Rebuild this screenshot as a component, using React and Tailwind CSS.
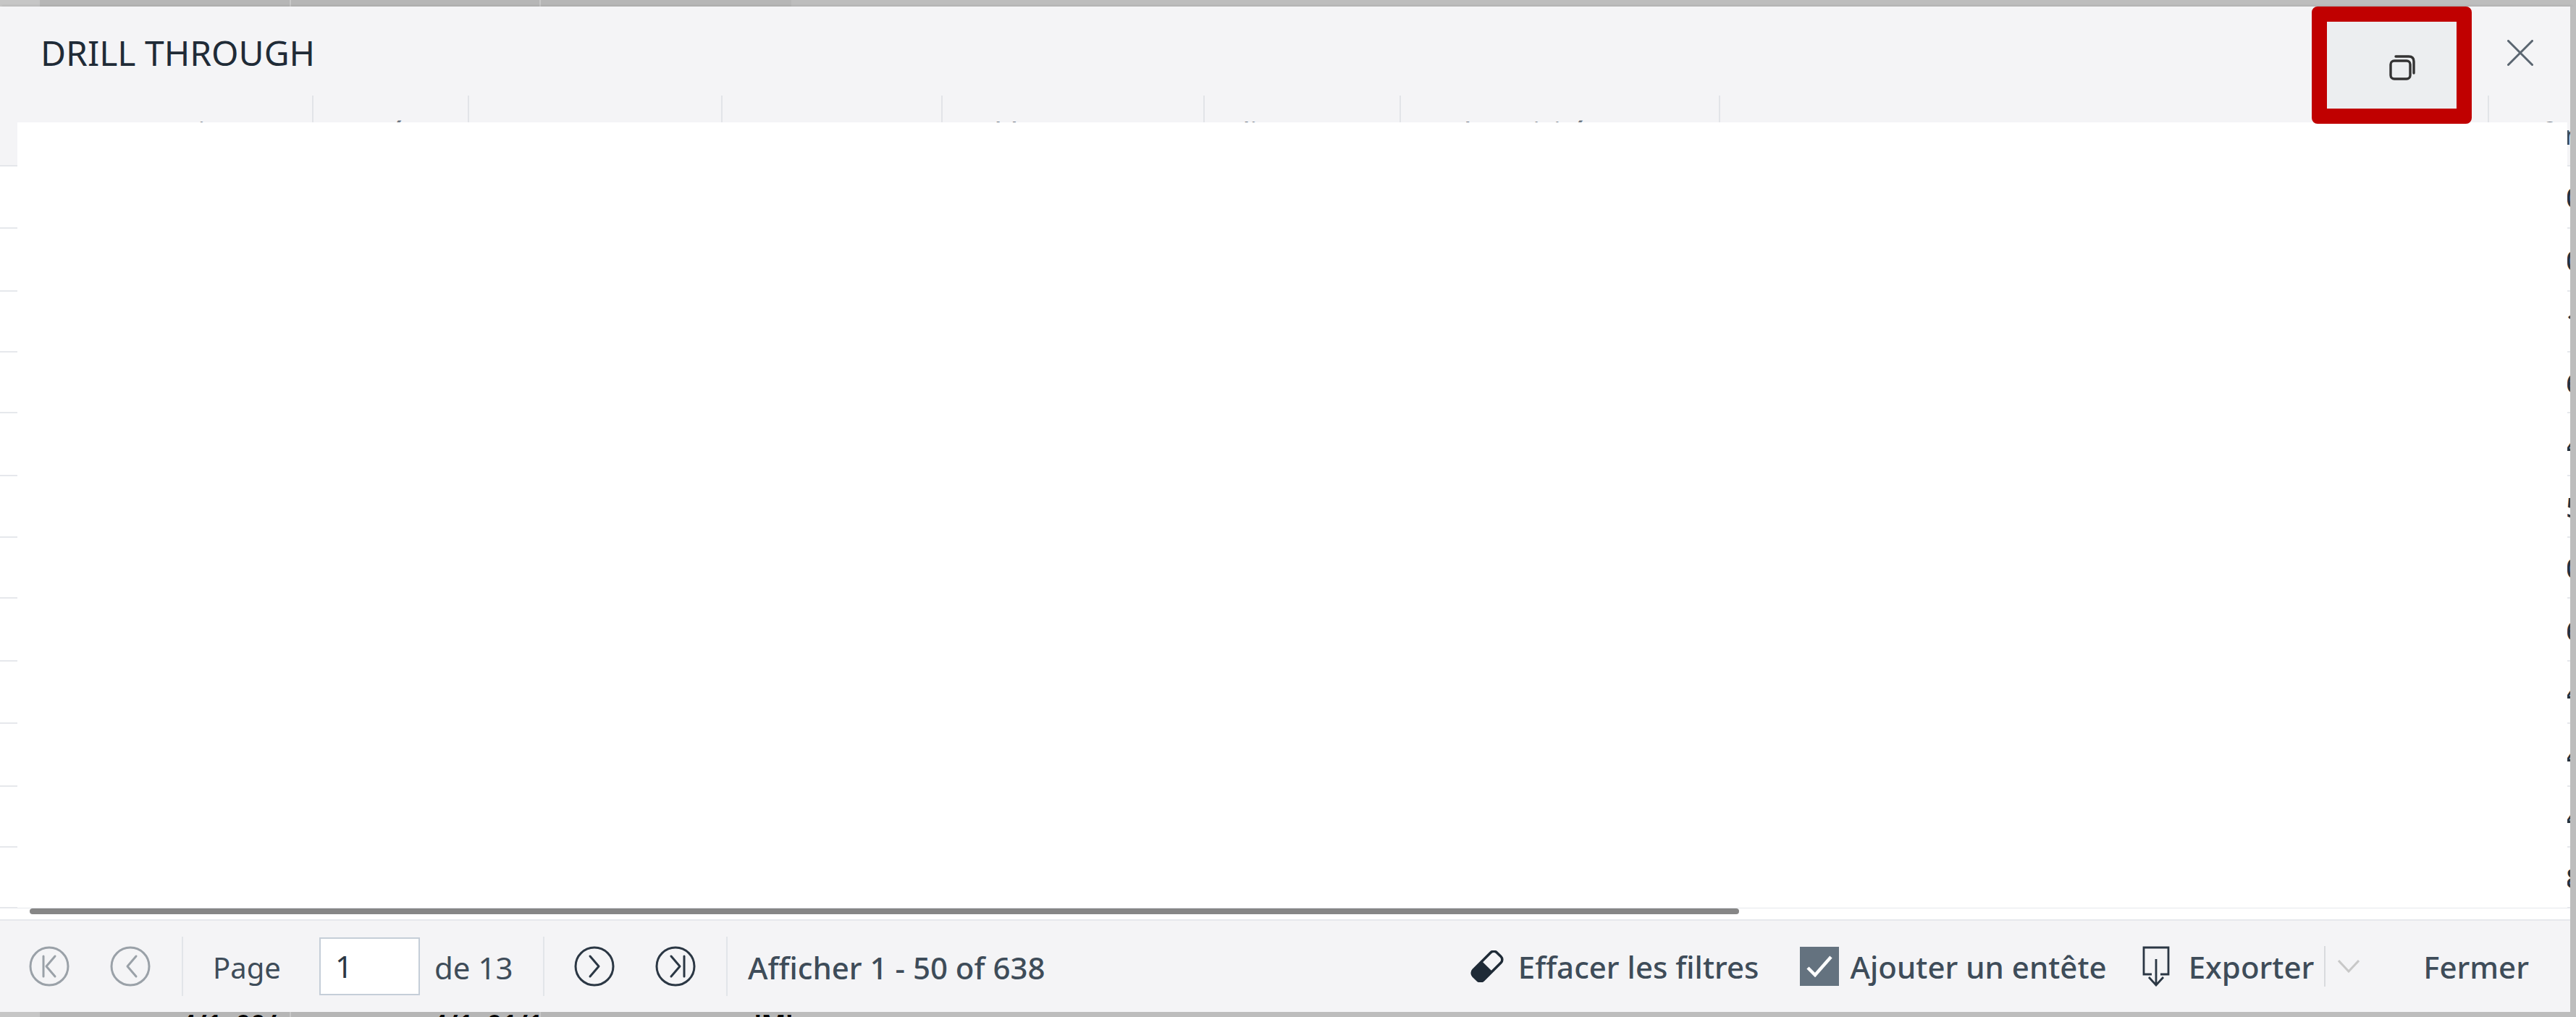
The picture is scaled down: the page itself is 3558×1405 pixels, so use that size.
const SANS = "font-['Noto_Sans',sans-serif]"

const COLUMNS = [
  { w: 'w-[433px]', pl: 'pl-[34px]', label: 'Num Transaction' },
  { w: 'w-[215px]', pl: 'pl-[36px]', label: 'Année' },
  { w: 'w-[350px]', pl: 'pl-[30px]', label: 'Date Comp' },
  { w: 'w-[304px]', pl: 'pl-[30px]', label: 'Num Compte' },
  { w: 'w-[362px]', pl: 'pl-[30px]', label: 'Solde' },
  { w: 'w-[271px]', pl: 'pl-[30px]', label: 'Client' },
  { w: 'w-[441px]', pl: 'pl-[30px]', label: 'Code Activité' },
  { w: 'w-[1062px]', pl: 'pl-[30px]', label: 'Date' },
  { w: 'flex-1', pl: 'pl-[30px]', label: 'Ref' },
]

const ROWS = [
  { h: 'h-[86px]', v: '0' },
  { h: 'h-[87px]', v: '0' },
  { h: 'h-[84px]', v: '1' },
  { h: 'h-[84px]', v: '6' },
  { h: 'h-[87px]', v: '4' },
  { h: 'h-[85px]', v: '5' },
  { h: 'h-[84px]', v: '0' },
  { h: 'h-[87px]', v: '6' },
  { h: 'h-[86px]', v: '4' },
  { h: 'h-[87px]', v: '4' },
  { h: 'h-[84px]', v: '4' },
  { h: 'h-[84px]', v: '8' },
]

function Strip({ values }) {
  return (
    <div className="flex flex-col w-full">
      <div className="h-[61px] bg-[#f4f4f6] border-b-2 border-[#e4e6ea] flex items-start overflow-hidden">
        {values && <span className="ml-[-4px] mt-[-2px] text-[36px] font-medium text-[#3e4c59] leading-[40px]">m</span>}
      </div>
      {ROWS.map((r, i) => (
        <div key={i} className={`${r.h} bg-white border-b-2 border-[#e6e8ec] flex items-center overflow-hidden`}>
          {values && <span className="ml-[-2px] text-[38px] text-[#27323d] font-medium leading-none">{r.v}</span>}
        </div>
      ))}
    </div>
  )
}

function BackdropCells({ bottom }) {
  return (
    <div className="flex h-full">
      <div className="w-[55px] bg-[#c6c6c6]" />
      <div className="w-[347px] bg-[#b6b6b6] border-r-2 border-[#c8c8c8] overflow-hidden pl-[195px]">
        {bottom && <span className="block mt-[-3px] text-[36px] font-bold leading-[40px] text-black whitespace-nowrap">4/1, 00/</span>}
      </div>
      <div className="w-[345px] bg-[#b6b6b6] border-r-2 border-[#c8c8c8] overflow-hidden pl-[195px]">
        {bottom && <span className="block mt-[-3px] text-[36px] font-bold leading-[40px] text-black whitespace-nowrap">4/1, 01/1</span>}
      </div>
      <div className="w-[346px] bg-[#b6b6b6] overflow-hidden pl-[295px]">
        {bottom && <span className="block mt-[-3px] text-[36px] font-bold leading-[40px] text-black whitespace-nowrap">'M'</span>}
      </div>
      <div className="flex-1 bg-[#bdbdbd]" />
    </div>
  )
}

function NavCircle({ dir, bar, muted }) {
  const color = muted ? '#9aa1a8' : '#2b3744'
  return (
    <svg width="56" height="56" viewBox="0 0 56 56" fill="none" stroke={color} strokeWidth="3" strokeLinecap="round" strokeLinejoin="round">
      <circle cx="28" cy="28" r="26" />
      {dir === 'left' ? <path d="M36 14 L24 28 L36 42" /> : <path d="M22 14 L34 28 L22 42" />}
      {bar && (dir === 'left' ? <path d="M20 14 V42" /> : <path d="M40 14 V42" />)}
    </svg>
  )
}

function Sep({ className }) {
  return <div className={`w-[2px] h-[82px] bg-[#e2e5e9] ${className}`} />
}

export default function App() {
  return (
    <div className={`w-[3558px] h-[1405px] flex flex-col bg-[#bdbdbd] overflow-hidden ${SANS}`}>
      <div className="h-[9px] shrink-0"><BackdropCells /></div>

      <div className="flex h-[1389px] shrink-0">
        <div className="w-[3550px] flex flex-col shadow-[2px_0_4px_rgba(0,0,0,0.15)]">
          {/* Header */}
          <div className="h-[160px] shrink-0 bg-[#f4f4f6] flex flex-col">
            <div className="h-[123px] shrink-0 flex items-start">
              <h2 className="ml-[56px] mt-[32px] text-[48px] leading-[64px] font-normal text-[#1f2b37] whitespace-nowrap">DRILL THROUGH</h2>
              <button className="ml-auto relative z-10 w-[221px] h-[162px] shrink-0 rounded-[8px] border-[21px] border-[#c00000] bg-[#eceef0] flex items-center justify-center">
                <svg className="ml-[29px] mt-[5px]" width="36" height="36" viewBox="0 0 36 36" fill="none" stroke="#333" strokeWidth="3.4" strokeLinecap="round" strokeLinejoin="round">
                  <rect x="2" y="9" width="27" height="25" rx="5" />
                  <path d="M9 3 H27 Q34 3 34 10 V26" />
                </svg>
              </button>
              <button className="ml-[49px] mr-[51px] mt-[46px] shrink-0">
                <svg width="36" height="36" viewBox="0 0 36 36" fill="none" stroke="#5a6570" strokeWidth="3" strokeLinecap="round">
                  <path d="M1.5 1.5 L34.5 34.5 M34.5 1.5 L1.5 34.5" />
                </svg>
              </button>
            </div>
            <div className="h-[37px] flex overflow-hidden">
              {COLUMNS.map((c, i) => (
                <div key={i} className={`${c.w} ${c.pl} shrink-0 border-r-2 border-[#e2e4e8] last:border-r-0 overflow-hidden`}>
                  <span className="block mt-[30px] text-[36px] leading-[40px] font-medium text-[#6b7480] whitespace-nowrap">{c.label}</span>
                </div>
              ))}
            </div>
          </div>

          {/* Body */}
          <div className="h-[1085px] shrink-0 flex bg-white overflow-hidden">
            <div className="w-[24px] shrink-0"><Strip /></div>
            <div className="flex-1 bg-white" />
            <div className="w-[4px] shrink-0"><Strip values /></div>
          </div>

          {/* Horizontal scrollbar */}
          <div className="h-[16px] shrink-0 bg-white border-t border-[#e6e8ec] pl-[41px]">
            <div className="w-[2361px] h-[8px] rounded-full bg-[#868686]" />
          </div>

          {/* Footer */}
          <div className="flex-1 bg-[#f4f4f6] border-t-2 border-[#e6e8ec] flex items-center text-[#3e4c59] text-[42px] leading-none whitespace-nowrap">
            <div className="ml-[40px]"><NavCircle dir="left" bar muted /></div>
            <div className="ml-[56px]"><NavCircle dir="left" muted /></div>
            <Sep className="ml-[43px]" />
            <span className="ml-[41px] w-[97px] text-[40px] mt-[3px]">Page</span>
            <div className="ml-[50px] w-[139px] h-[80px] bg-white border-2 border-[#c5ced8] flex items-center pl-[20px] text-[#2b3744]">1</div>
            <span className="ml-[20px] w-[108px] mt-[3px]">de 13</span>
            <Sep className="ml-[42px]" />
            <div className="ml-[41px]"><NavCircle dir="right" /></div>
            <div className="ml-[56px]"><NavCircle dir="right" bar /></div>
            <Sep className="ml-[42px]" />
            <span className="ml-[28px] mt-[3px] font-medium">Afficher 1 - 50 of 638</span>

            <div className="ml-auto flex items-center font-medium">
              <svg width="46" height="44" viewBox="0 0 46 44">
                <g transform="rotate(-45 23 22)">
                  <rect x="0" y="12" width="46" height="20" rx="6" fill="#f4f4f6" stroke="#1f2b37" strokeWidth="3.5" />
                  <path d="M6 12 H23 V32 H6 Q0 32 0 26 V18 Q0 12 6 12 Z" fill="#1f2b37" />
                </g>
              </svg>
              <span className="ml-[20px] mt-[2px]">Effacer les filtres</span>
              <div className="ml-[56px] w-[54px] h-[54px] bg-[#64727f] flex items-center justify-center">
                <svg width="36" height="30" viewBox="0 0 36 30" fill="none" stroke="#fff" strokeWidth="4.5">
                  <path d="M2 17 L12 27 L34 2" />
                </svg>
              </div>
              <span className="ml-[16px] mt-[2px]">Ajouter un entête</span>
              <svg className="ml-[49px]" width="38" height="56" viewBox="0 0 38 56" fill="none" stroke="#2b3744" strokeWidth="2.8">
                <path d="M13 39 H2 V2 H36 V39 H25" />
                <path d="M19 18 V54 M9 43 L19 54 L29 43" />
              </svg>
              <span className="ml-[26px] mt-[2px]">Exporter</span>
              <div className="ml-[14px] w-[2px] h-[56px] bg-[#d9dbde]" />
              <svg className="ml-[17px]" width="30" height="18" viewBox="0 0 30 18" fill="none" stroke="#c8c8c8" strokeWidth="3">
                <path d="M1 1 L15 16 L29 1" />
              </svg>
              <span className="ml-[88px] mr-[57px] mt-[2px]">Fermer</span>
            </div>
          </div>
        </div>
        <div className="flex-1 bg-[#bdbdbd]" />
      </div>

      <div className="h-[7px] shrink-0"><BackdropCells bottom /></div>
    </div>
  )
}
